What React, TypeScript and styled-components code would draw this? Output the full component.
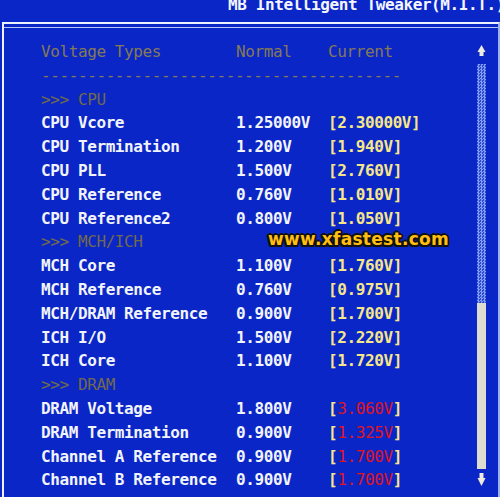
import React from "react";
import styled, { createGlobalStyle } from "styled-components";

const GlobalStyle = createGlobalStyle`
  html, body {
    margin: 0;
    padding: 0;
    background: #0b26c6;
    overflow: hidden;
  }
`;

const Screen = styled.div`
  position: relative;
  width: 500px;
  height: 497px;
  background: #0b26c6;
  font-family: "DejaVu Sans Mono", "Liberation Mono", monospace;
  font-size: 16px;
  letter-spacing: -0.4px;
  display: flex;
  flex-direction: column;
  overflow: hidden;
`;

const TitleBar = styled.div`
  height: 22px;
  flex: none;
  padding-left: 228px;
  overflow: hidden;
  white-space: nowrap;
`;

const Title = styled.div`
  margin-top: -3px;
  line-height: 16px;
  font-weight: bold;
  color: #f4f6ff;
`;

const Panel = styled.div`
  flex: 1;
  margin-left: 2px;
  border-top: 2px solid #eef0ff;
  border-left: 2px solid #eef0ff;
  border-right: 2px solid #9fb0f0;
  padding-top: 3px;
  display: flex;
  flex-direction: column;
  min-height: 0;
`;

const Inner = styled.div`
  flex: 1;
  border-top: 1px solid #b8c4f8;
  display: flex;
  min-height: 0;
`;

const Table = styled.div`
  flex: 1;
  padding: 12px 0 0 37px;
`;

const Row = styled.div`
  display: grid;
  grid-template-columns: 195px 92px 1fr;
  height: 23.8px;
  line-height: 23.8px;
  white-space: nowrap;
`;

const Heading = styled.span<{ $dim?: boolean }>`
  color: ${(p) => (p.$dim ? "#716a4c" : "#847a56")};
  font-weight: normal;
`;

const Label = styled.span`
  color: #f2f4fc;
  font-weight: bold;
`;

const Value = styled.span`
  color: #f2f4fc;
  font-weight: bold;
`;

const Current = styled.span`
  color: #f6e68a;
  font-weight: bold;
`;

const Alarm = styled.span`
  color: #e0141c;
  font-weight: normal;
`;

const ScrollColumn = styled.div`
  width: 10px;
  margin-right: 12px;
  padding-top: 17px;
  display: flex;
  flex-direction: column;
  align-items: center;
`;

const Arrow = styled.svg`
  display: block;
  flex: none;
`;

const Track = styled.div`
  margin-top: 8px;
  width: 9px;
  display: flex;
  flex-direction: column;
`;

const Dots = styled.div`
  height: 239px;
  background: repeating-conic-gradient(#7f9cf2 0 25%, #2a48d4 0 50%) 0 0 / 3px 3px;
`;

const Thumb = styled.div`
  height: 166px;
  background: #dedbd0;
`;

const Watermark = styled.div`
  position: absolute;
  left: 268px;
  top: 229px;
  font-family: "DejaVu Sans", "Liberation Sans", sans-serif;
  font-weight: bold;
  font-size: 17px;
  letter-spacing: 0.3px;
  color: #ffbe10;
  text-shadow: -1.5px -1.5px 0 #111, 1.5px -1.5px 0 #111, -1.5px 1.5px 0 #111,
    1.5px 1.5px 0 #111, 0 2px 0 #111, 0 -2px 0 #111, 2px 0 0 #111, -2px 0 0 #111;
`;

type Item =
  | { kind: "section"; name: string }
  | { kind: "row"; name: string; normal: string; current: string; hot?: boolean };

const items: Item[] = [
  { kind: "section", name: ">>> CPU" },
  { kind: "row", name: "CPU Vcore", normal: "1.25000V", current: "2.30000V" },
  { kind: "row", name: "CPU Termination", normal: "1.200V", current: "1.940V" },
  { kind: "row", name: "CPU PLL", normal: "1.500V", current: "2.760V" },
  { kind: "row", name: "CPU Reference", normal: "0.760V", current: "1.010V" },
  { kind: "row", name: "CPU Reference2", normal: "0.800V", current: "1.050V" },
  { kind: "section", name: ">>> MCH/ICH" },
  { kind: "row", name: "MCH Core", normal: "1.100V", current: "1.760V" },
  { kind: "row", name: "MCH Reference", normal: "0.760V", current: "0.975V" },
  { kind: "row", name: "MCH/DRAM Reference", normal: "0.900V", current: "1.700V" },
  { kind: "row", name: "ICH I/O", normal: "1.500V", current: "2.220V" },
  { kind: "row", name: "ICH Core", normal: "1.100V", current: "1.720V" },
  { kind: "section", name: ">>> DRAM" },
  { kind: "row", name: "DRAM Voltage", normal: "1.800V", current: "3.060V", hot: true },
  { kind: "row", name: "DRAM Termination", normal: "0.900V", current: "1.325V", hot: true },
  { kind: "row", name: "Channel A Reference", normal: "0.900V", current: "1.700V", hot: true },
  { kind: "row", name: "Channel B Reference", normal: "0.900V", current: "1.700V", hot: true },
];

export default function App() {
  return (
    <>
      <GlobalStyle />
      <Screen>
        <TitleBar>
          <Title>MB Intelligent Tweaker(M.I.T.)</Title>
        </TitleBar>
        <Panel>
          <Inner>
            <Table>
              <Row>
                <Heading>Voltage Types</Heading>
                <Heading>Normal</Heading>
                <Heading>Current</Heading>
              </Row>
              <Row>
                <Heading>{"-".repeat(39)}</Heading>
              </Row>
              {items.map((it, i) =>
                it.kind === "section" ? (
                  <Row key={i}>
                    <Heading $dim>{it.name}</Heading>
                  </Row>
                ) : (
                  <Row key={i}>
                    <Label>{it.name}</Label>
                    <Value>{it.normal}</Value>
                    <Current>
                      [{it.hot ? <Alarm>{it.current}</Alarm> : it.current}]
                    </Current>
                  </Row>
                )
              )}
            </Table>
            <ScrollColumn>
              <Arrow width="9" height="11" viewBox="0 0 9 11">
                <path d="M4.5 0 L8.5 7 L0.5 7 Z" fill="#eeeae0" />
                <rect x="2.5" y="7" width="4" height="4" fill="#eeeae0" />
              </Arrow>
              <Track>
                <Dots />
                <Thumb />
              </Track>
              <Arrow width="9" height="13" viewBox="0 0 9 13" style={{ marginTop: 4 }}>
                <rect x="2.5" y="0" width="4" height="5" fill="#eeeae0" />
                <path d="M0.5 5 L8.5 5 L4.5 13 Z" fill="#eeeae0" />
              </Arrow>
            </ScrollColumn>
          </Inner>
        </Panel>
        <Watermark>www.xfastest.com</Watermark>
      </Screen>
    </>
  );
}
